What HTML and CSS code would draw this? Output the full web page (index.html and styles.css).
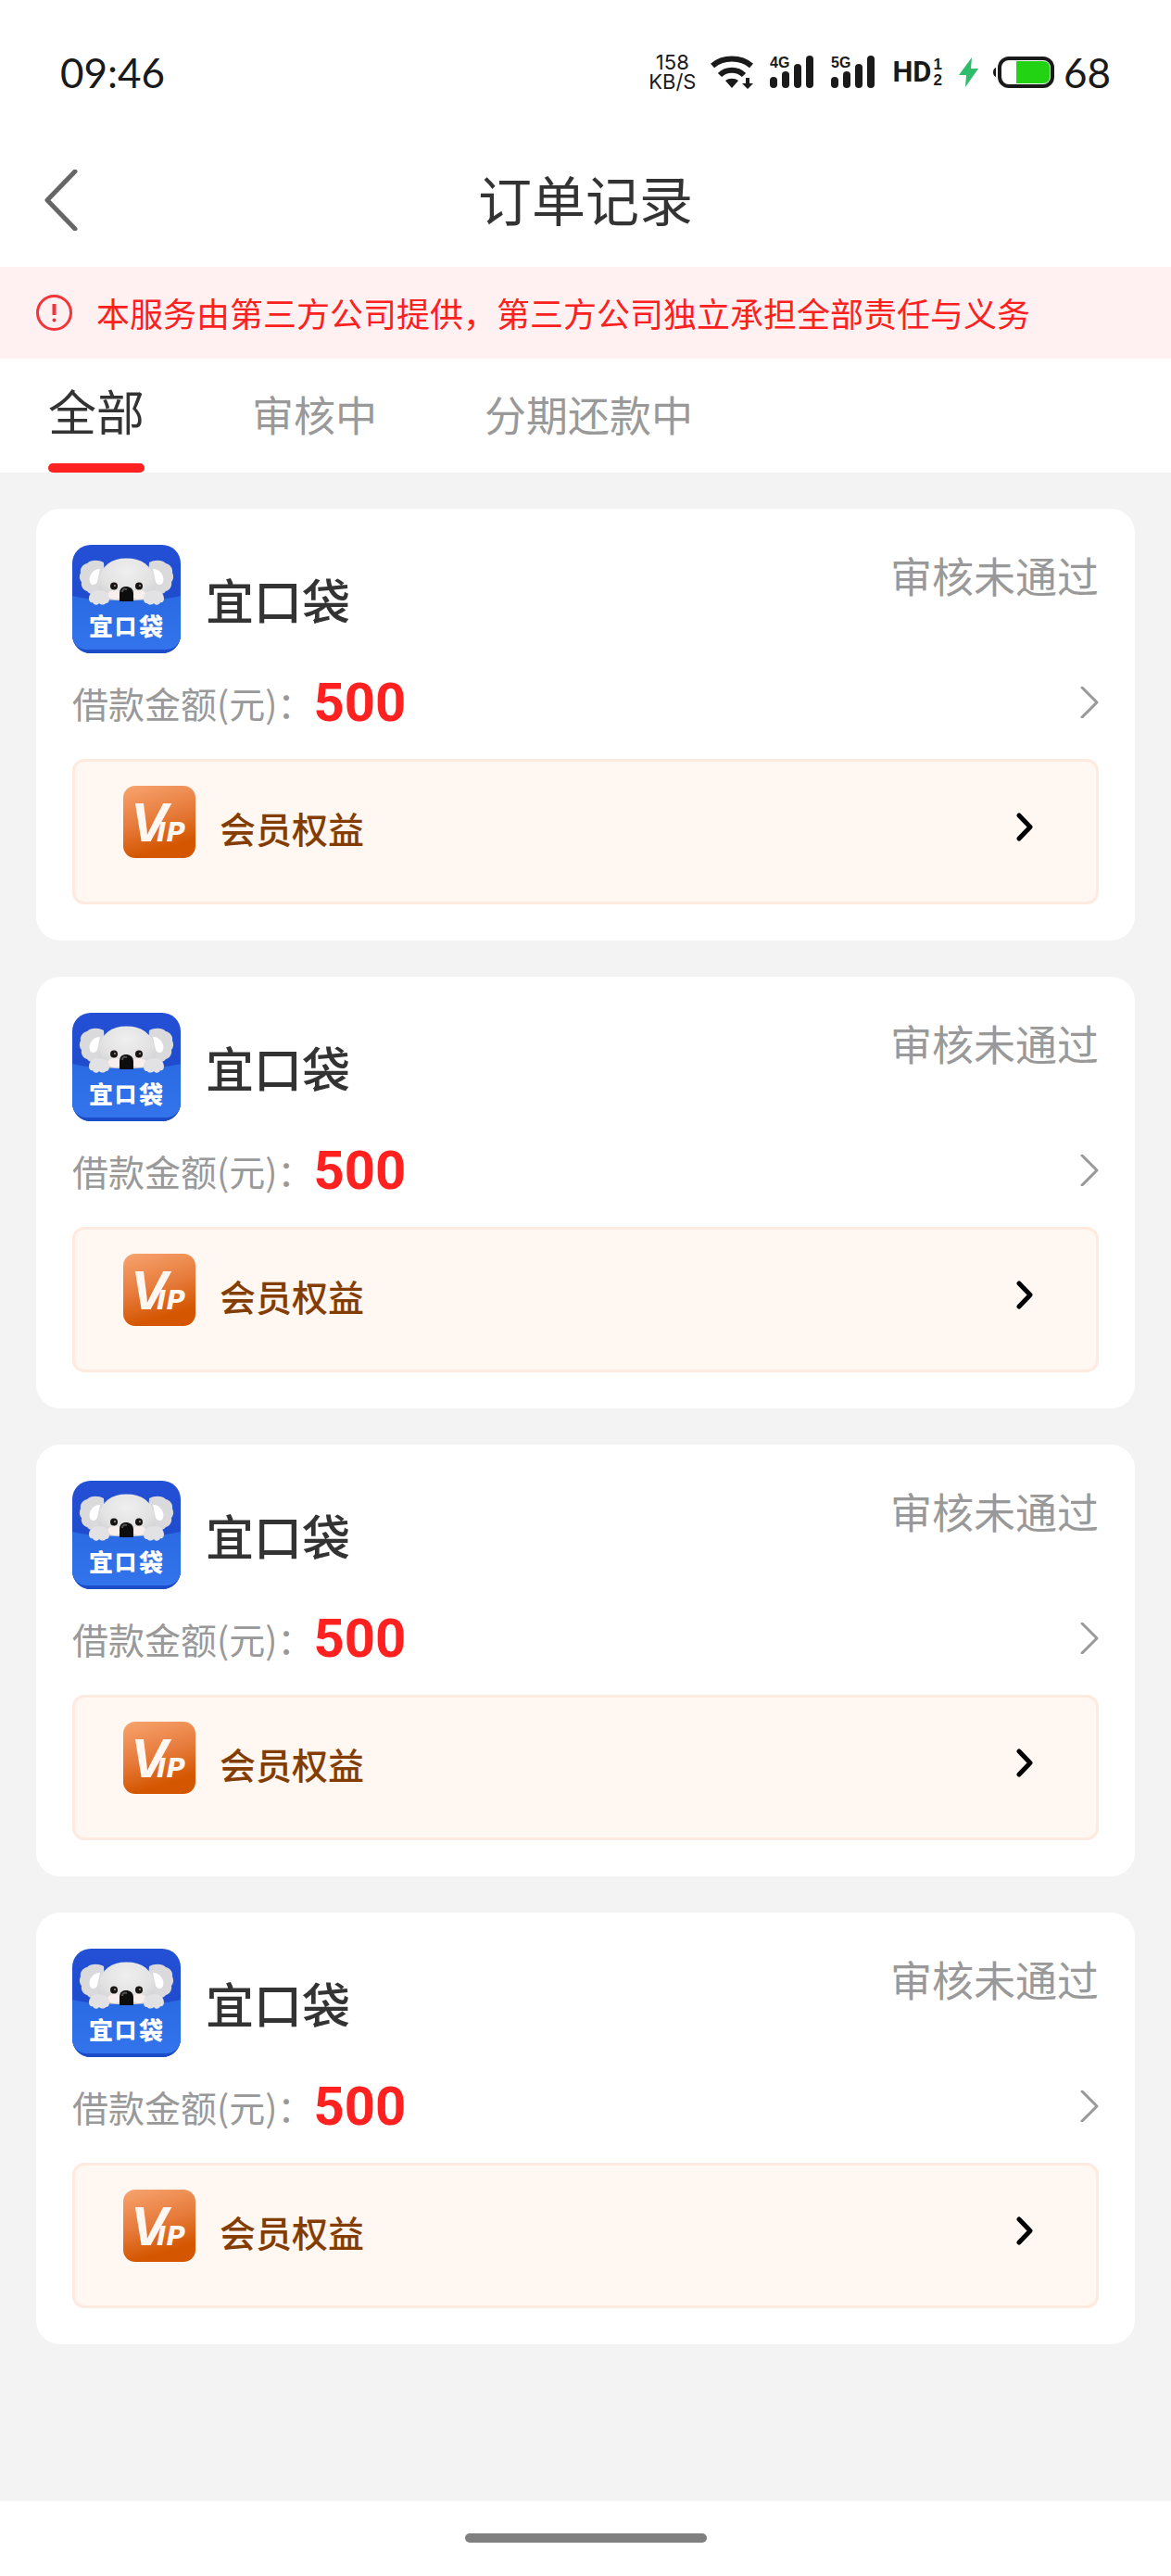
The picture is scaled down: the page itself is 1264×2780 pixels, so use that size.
FILE: index.html
```html
<!DOCTYPE html>
<html lang="zh-CN">
<head>
<meta charset="utf-8">
<meta name="viewport" content="width=device-width, initial-scale=1">
<title>订单记录</title>
<link rel="stylesheet" href="styles.css">
</head>
<body>
<svg class="defs" aria-hidden="true">
  <defs>
    <linearGradient id="sky" x1="0" y1="0" x2="0" y2="1"><stop offset="0" stop-color="#2350d6"/><stop offset="1" stop-color="#1c46c4"/></linearGradient>
    <linearGradient id="pocket" x1="0" y1="0" x2="0" y2="1"><stop offset="0" stop-color="#2a6ae2"/><stop offset="1" stop-color="#3374ec"/></linearGradient>
    <radialGradient id="fur" cx=".5" cy=".3" r=".75"><stop offset="0" stop-color="#efefef"/><stop offset=".6" stop-color="#e2e2e2"/><stop offset="1" stop-color="#cdcdcf"/></radialGradient>
    <linearGradient id="gold" x1="0.2" y1="0" x2="0.5" y2="1"><stop offset="0" stop-color="#f6a06a"/><stop offset=".5" stop-color="#e67a3a"/><stop offset=".9" stop-color="#d45600"/></linearGradient>
    <clipPath id="tile"><rect width="117" height="117" rx="20"/></clipPath>
    <symbol id="koala" viewBox="0 0 117 117">
      <g clip-path="url(#tile)">
        <rect width="117" height="117" fill="url(#sky)"/>
        <path d="M34 19c-6-3-14-3-18 1-5 1-8 6-7 10-2 4-1 8 1 10-1 5 2 9 6 10 2 3 6 4 10 3l10-3z" fill="#dadadc"/>
        <path d="M83 19c6-3 14-3 18 1 5 1 8 6 7 10 2 4 1 8-1 10 1 5-2 9-6 10-2 3-6 4-10 3l-10-3z" fill="#dadadc"/>
        <path d="M30 26c-8 0-13 8-11 14 1 4 6 4 8 0z" fill="#fff"/>
        <path d="M87 26c8 0 13 8 11 14-1 4-6 4-8 0z" fill="#fff"/>
        <path d="M58.500 14.500c17 0 27 8 30 22 2 10 2 25-10 25H39c-12 0-13-15-10-25 3-14 13-22 29.500-22z" fill="url(#fur)"/>
        <ellipse cx="46" cy="54" rx="8" ry="5" fill="#f8efec"/><ellipse cx="72" cy="54" rx="8" ry="5" fill="#f8efec"/>
        <path d="M0 55c16 4 34 5 58 5s43-1 59-5v62H0z" fill="#1d4cc8"/>
        <path d="M0 55c16 4 34 5 58 5s43-1 59-5v46c-3 8-8 12-16 12H16c-8 0-13-4-16-12z" fill="url(#pocket)"/>
        <path d="M51 61v-8c0-6 3-8 7-8s8 2 8 8v8z" fill="#0d0d0d"/>
        <path d="M54 51c0-3 2-4 5-3" fill="none" stroke="#555" stroke-width="2"/>
        <circle cx="45" cy="44.500" r="4" fill="#1a1412"/><circle cx="72" cy="44.500" r="4" fill="#1a1412"/>
        <circle cx="46" cy="44" r="1" fill="#999"/><circle cx="73" cy="44" r="1" fill="#999"/>
        <path d="M18 58c0-6 5-9 11-9s11 3 11 9c0 3-1 5-4 5-1 2-5 2-7 0-2 3-6 2-7-1-2 1-4-1-4-4z" fill="#e2e2e4"/>
        <path d="M77 58c0-6 5-9 11-9s11 3 11 9c0 3-2 5-4 4-1 3-5 4-7 1-2 2-6 2-7 0-3 0-4-2-4-5z" fill="#e2e2e4"/>
        <text class="koala-text" x="18" y="98">宜</text>
        <text class="koala-text koala-mid" x="46" y="96">口</text>
        <text class="koala-text" x="72" y="98">袋</text>
      </g>
    </symbol>
    <symbol id="vip" viewBox="0 0 78 78">
      <rect width="78" height="78" rx="13" fill="url(#gold)"/>
      <text class="vip-v" x="8" y="60">V</text>
      <text class="vip-ip" x="36" y="60">IP</text>
    </symbol>
  </defs>
</svg>

<div class="statusbar">
  <time class="clock">09:46</time>
  <div class="speed"><span>158</span><span>KB/S</span></div>
  <svg class="wifi" width="46" height="36" viewBox="0 0 46 36" aria-label="Wi-Fi">
    <g fill="none" stroke="#1a1a1a" stroke-width="6"><path d="M2 11C13 1 33 1 44 11"/><path d="M10 21C17 14 29 14 36 21"/></g>
    <path d="M16 27c4-3 10-3 14 0l-7 8z" fill="#1a1a1a"/>
    <path d="M38 24h4v6h4l-6 6-6-6h4z" fill="#1a1a1a"/>
  </svg>
  <svg class="signal" width="48" height="36" viewBox="0 0 48 36" aria-label="4G">
    <text class="net" x="0" y="13">4G</text>
    <g fill="#1a1a1a"><rect y="23" width="8" height="12" rx="4"/><rect x="13" y="17" width="8" height="18" rx="4"/><rect x="26" y="9" width="8" height="26" rx="4"/><rect x="39" width="8" height="35" rx="4"/></g>
  </svg>
  <svg class="signal" width="48" height="36" viewBox="0 0 48 36" aria-label="5G">
    <text class="net" x="0" y="13">5G</text>
    <g fill="#1a1a1a"><rect y="23" width="8" height="12" rx="4"/><rect x="13" y="17" width="8" height="18" rx="4"/><rect x="26" y="9" width="8" height="26" rx="4"/><rect x="39" width="8" height="35" rx="4"/></g>
  </svg>
  <div class="hd"><span>HD</span><span class="sims"><span>1</span><span>2</span></span></div>
  <svg class="bolt" width="21" height="32" viewBox="0 0 21 32" aria-hidden="true"><path d="M14 0 0 19h8L7 32 21 12h-8z" fill="#2dbd6b"/></svg>
  <svg class="battery" width="66" height="34" viewBox="0 0 66 34" aria-hidden="true">
    <path d="M3 12v10c-4-1-4-9 0-10z" fill="#1a1a1a"/>
    <rect x="7" y="2" width="57" height="30" rx="10" fill="#fff" stroke="#1a1a1a" stroke-width="4"/>
    <path d="M25 5h29q7 0 7 7v10q0 7-7 7H25z" fill="#22d314"/>
  </svg>
  <span class="level">68</span>
</div>

<header class="navbar">
  <button class="back" type="button" aria-label="返回"><svg width="36" height="66" viewBox="0 0 36 66"><path d="M33 2 3 33l30 31" fill="none" stroke="#666" stroke-width="5" stroke-linecap="round" stroke-linejoin="round"/></svg></button>
  <h1>订单记录</h1>
</header>

<div class="notice">
  <svg width="39" height="39" viewBox="0 0 39 39" aria-hidden="true"><circle cx="19.500" cy="19.500" r="18" fill="none" stroke="#f5333a" stroke-width="3"/><path d="M19.500 10v12" stroke="#f5333a" stroke-width="4"/><circle cx="19.500" cy="27.500" r="2" fill="#f5333a"/></svg>
  <p>本服务由第三方公司提供，第三方公司独立承担全部责任与义务</p>
</div>

<nav class="tabs">
  <button class="tab active" type="button">全部</button>
  <button class="tab" type="button">审核中</button>
  <button class="tab" type="button">分期还款中</button>
</nav>

<main class="orders">
  <article class="card">
    <div class="head"><svg class="logo"><use href="#koala"/></svg><h2>宜口袋</h2><span class="state">审核未通过</span></div>
    <a class="amount" href="#order"><span class="label">借款金额(元)：</span><strong>500</strong><svg class="go" width="20" height="34" viewBox="0 0 20 34"><path d="m2 1 16 16L2 33"/></svg></a>
    <a class="benefit" href="#vip"><svg class="badge"><use href="#vip"/></svg><span>会员权益</span><svg class="more" width="18" height="31" viewBox="0 0 18 31"><path d="m3 3 12 12.500L3 28"/></svg></a>
  </article>
  <article class="card">
    <div class="head"><svg class="logo"><use href="#koala"/></svg><h2>宜口袋</h2><span class="state">审核未通过</span></div>
    <a class="amount" href="#order"><span class="label">借款金额(元)：</span><strong>500</strong><svg class="go" width="20" height="34" viewBox="0 0 20 34"><path d="m2 1 16 16L2 33"/></svg></a>
    <a class="benefit" href="#vip"><svg class="badge"><use href="#vip"/></svg><span>会员权益</span><svg class="more" width="18" height="31" viewBox="0 0 18 31"><path d="m3 3 12 12.500L3 28"/></svg></a>
  </article>
  <article class="card">
    <div class="head"><svg class="logo"><use href="#koala"/></svg><h2>宜口袋</h2><span class="state">审核未通过</span></div>
    <a class="amount" href="#order"><span class="label">借款金额(元)：</span><strong>500</strong><svg class="go" width="20" height="34" viewBox="0 0 20 34"><path d="m2 1 16 16L2 33"/></svg></a>
    <a class="benefit" href="#vip"><svg class="badge"><use href="#vip"/></svg><span>会员权益</span><svg class="more" width="18" height="31" viewBox="0 0 18 31"><path d="m3 3 12 12.500L3 28"/></svg></a>
  </article>
  <article class="card">
    <div class="head"><svg class="logo"><use href="#koala"/></svg><h2>宜口袋</h2><span class="state">审核未通过</span></div>
    <a class="amount" href="#order"><span class="label">借款金额(元)：</span><strong>500</strong><svg class="go" width="20" height="34" viewBox="0 0 20 34"><path d="m2 1 16 16L2 33"/></svg></a>
    <a class="benefit" href="#vip"><svg class="badge"><use href="#vip"/></svg><span>会员权益</span><svg class="more" width="18" height="31" viewBox="0 0 18 31"><path d="m3 3 12 12.500L3 28"/></svg></a>
  </article>
</main>

<footer class="homebar"><span></span></footer>
</body>
</html>
```
FILE: styles.css
```css
* { box-sizing: border-box; }
body {
  margin: 0;
  min-height: 100vh;
  display: flex;
  flex-direction: column;
  background: #fff;
  color: #333;
  font-family: "Noto Sans CJK SC", sans-serif;
}
h1, h2, p { margin: 0; font-weight: 400; }
button { border: 0; padding: 0; background: none; color: inherit; font: inherit; }
a { color: inherit; text-decoration: none; }
svg { display: block; flex: none; }
.defs { position: absolute; width: 0; height: 0; }

.statusbar {
  display: flex;
  align-items: center;
  height: 144px;
  padding: 12px 65px 0;
  color: #1a1a1a;
}
.clock, .level { font: 44px/48px Lato, sans-serif; }
.clock { margin-right: auto; }
.speed {
  display: flex;
  flex-direction: column;
  align-items: center;
  margin-right: 16px;
  font: 22px/21px Inter, sans-serif;
}
.wifi, .signal { margin-right: 18px; }
.net { font: 700 16px "Liberation Sans", sans-serif; fill: #1a1a1a; }
.hd {
  display: flex;
  align-items: center;
  gap: 2px;
  margin-right: 18px;
  font: 700 31px/36px Roboto, sans-serif;
}
.sims { display: flex; flex-direction: column; font: 700 17px/17px "Liberation Sans", sans-serif; }
.bolt { margin-right: 16px; }
.battery { margin-right: 10px; }

.navbar {
  display: grid;
  grid-template-columns: 1fr auto 1fr;
  align-items: center;
  height: 144px;
  padding: 0 48px;
}
.back { justify-self: start; }
h1 { padding-bottom: 4px; font-size: 58px; line-height: 72px; }

.notice {
  display: flex;
  align-items: center;
  gap: 26px;
  height: 99px;
  padding: 0 39px;
  background: #fff1f1;
  color: #fc2020;
  font-size: 36px;
  line-height: 48px;
}
.notice p { padding-bottom: 2px; }

.tabs { display: flex; gap: 116px; height: 123px; padding: 0 52px; }
.tab { position: relative; padding-bottom: 4px; color: #999; font-size: 45px; line-height: 72px; }
.tab.active { padding-bottom: 12px; color: #333; font-size: 52px; }
.tab.active::after {
  content: "";
  position: absolute;
  left: 0;
  right: 0;
  bottom: 0;
  height: 10px;
  border-radius: 5px;
  background: #ff2020;
}

.orders {
  flex: 1;
  display: flex;
  flex-direction: column;
  gap: 39px;
  padding: 39px;
  background: #f3f3f3;
}
.card { padding: 39px; border-radius: 26px; background: #fff; }
.head { display: flex; align-items: center; }
.logo { width: 117px; height: 117px; }
h2 { margin-left: 27px; font-size: 52px; font-weight: 500; line-height: 72px; }
.state { align-self: flex-start; margin-left: auto; color: #999; font-size: 45px; line-height: 66px; }
.amount { display: flex; align-items: center; height: 106px; margin-bottom: 8px; }
.label { color: #999; font-size: 39px; line-height: 58px; }
.amount strong { color: #ff2020; font: 700 58px/58px Roboto, sans-serif; }
.go, .more { margin-left: auto; fill: none; stroke-linecap: round; stroke-linejoin: round; }
.go { stroke: #999; stroke-width: 3; }
.more { stroke: #000; stroke-width: 5; }
.benefit {
  display: flex;
  align-items: center;
  gap: 26px;
  height: 157px;
  padding: 0 68px 10px 52px;
  border: 3px solid #ffeadf;
  border-radius: 13px;
  background: #fff7f1;
  color: #843d00;
  font-size: 39px;
  font-weight: 500;
  line-height: 58px;
}
.badge { align-self: flex-start; width: 78px; height: 78px; margin-top: 26px; }

.koala-text { font: 900 26px "Noto Sans CJK SC", sans-serif; fill: #fff; }
.koala-mid { font-size: 23px; }
.vip-v { font: italic 700 60px "Liberation Sans", sans-serif; fill: #fff7f1; }
.vip-ip { font: italic 700 28px "DejaVu Sans", sans-serif; fill: #fff7f1; }

.homebar { display: flex; justify-content: center; height: 81px; padding-top: 35px; }
.homebar span { width: 261px; height: 10px; border-radius: 5px; background: #808080; }
```
